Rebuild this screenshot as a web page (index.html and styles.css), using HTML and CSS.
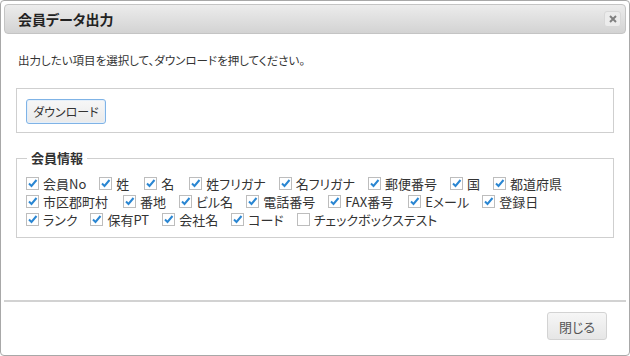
FILE: index.html
```html
<!DOCTYPE html>
<html lang="ja">
<head>
    <meta charset="UTF-8">
    <title>会員データ出力</title>
    <link rel="stylesheet" href="styles.css">
</head>
<body>
    <div class="dialog">
        <div class="titlebar">
            <span class="title">会員データ出力</span>
            <button class="close-x" title="close">
                <svg width="8" height="8" viewBox="0 0 8 8"><path d="M1 1 L7 7 M7 1 L1 7" stroke="#808080" stroke-width="2"/></svg>
            </button>
        </div>
        <div class="content">
            <p class="desc">出力したい項目を選択して、ダウンロードを押してください。</p>
            <div class="panel">
                <button class="button button-primary">ダウンロード</button>
            </div>
            <fieldset class="group">
                <legend>会員情報</legend>
                <div class="checks">
                    <label class="check"><span class="box"><svg width="11" height="11" viewBox="0 0 11 11"><path d="M2 5.5 L4.5 8 L9.5 2" /></svg></span>会員No</label>
                    <label class="check"><span class="box"><svg width="11" height="11" viewBox="0 0 11 11"><path d="M2 5.5 L4.5 8 L9.5 2" /></svg></span>姓</label>
                    <label class="check"><span class="box"><svg width="11" height="11" viewBox="0 0 11 11"><path d="M2 5.5 L4.5 8 L9.5 2" /></svg></span>名</label>
                    <label class="check"><span class="box"><svg width="11" height="11" viewBox="0 0 11 11"><path d="M2 5.5 L4.5 8 L9.5 2" /></svg></span>姓フリガナ</label>
                    <label class="check"><span class="box"><svg width="11" height="11" viewBox="0 0 11 11"><path d="M2 5.5 L4.5 8 L9.5 2" /></svg></span>名フリガナ</label>
                    <label class="check"><span class="box"><svg width="11" height="11" viewBox="0 0 11 11"><path d="M2 5.5 L4.5 8 L9.5 2" /></svg></span>郵便番号</label>
                    <label class="check"><span class="box"><svg width="11" height="11" viewBox="0 0 11 11"><path d="M2 5.5 L4.5 8 L9.5 2" /></svg></span>国</label>
                    <label class="check"><span class="box"><svg width="11" height="11" viewBox="0 0 11 11"><path d="M2 5.5 L4.5 8 L9.5 2" /></svg></span>都道府県</label>
                    <label class="check"><span class="box"><svg width="11" height="11" viewBox="0 0 11 11"><path d="M2 5.5 L4.5 8 L9.5 2" /></svg></span>市区郡町村</label>
                    <label class="check"><span class="box"><svg width="11" height="11" viewBox="0 0 11 11"><path d="M2 5.5 L4.5 8 L9.5 2" /></svg></span>番地</label>
                    <label class="check"><span class="box"><svg width="11" height="11" viewBox="0 0 11 11"><path d="M2 5.5 L4.5 8 L9.5 2" /></svg></span>ビル名</label>
                    <label class="check"><span class="box"><svg width="11" height="11" viewBox="0 0 11 11"><path d="M2 5.5 L4.5 8 L9.5 2" /></svg></span>電話番号</label>
                    <label class="check"><span class="box"><svg width="11" height="11" viewBox="0 0 11 11"><path d="M2 5.5 L4.5 8 L9.5 2" /></svg></span>FAX番号</label>
                    <label class="check"><span class="box"><svg width="11" height="11" viewBox="0 0 11 11"><path d="M2 5.5 L4.5 8 L9.5 2" /></svg></span>Eメール</label>
                    <label class="check"><span class="box"><svg width="11" height="11" viewBox="0 0 11 11"><path d="M2 5.5 L4.5 8 L9.5 2" /></svg></span>登録日</label>
                    <label class="check"><span class="box"><svg width="11" height="11" viewBox="0 0 11 11"><path d="M2 5.5 L4.5 8 L9.5 2" /></svg></span>ランク</label>
                    <label class="check"><span class="box"><svg width="11" height="11" viewBox="0 0 11 11"><path d="M2 5.5 L4.5 8 L9.5 2" /></svg></span>保有PT</label>
                    <label class="check"><span class="box"><svg width="11" height="11" viewBox="0 0 11 11"><path d="M2 5.5 L4.5 8 L9.5 2" /></svg></span>会社名</label>
                    <label class="check"><span class="box"><svg width="11" height="11" viewBox="0 0 11 11"><path d="M2 5.5 L4.5 8 L9.5 2" /></svg></span>コード</label>
                    <label class="check"><span class="box"></span>チェックボックステスト</label>
                </div>
            </fieldset>
        </div>
        <div class="footer">
            <button class="button button-close">閉じる</button>
        </div>
    </div>
</body>
</html>
```

FILE: styles.css
```css
body {
    margin: 0;
    font-family: "Noto Sans CJK JP", "Liberation Sans", sans-serif;
    font-feature-settings: "palt";
    color: #333;
    background-color: #fff;
}
.dialog {
    width: 630px;
    height: 356px;
    box-sizing: border-box;
    border: 1px solid #a8a8a8;
    border-radius: 4px;
    padding: 3px;
    display: flex;
    flex-direction: column;
    background-color: #fff;
}
.titlebar {
    height: 30px;
    box-sizing: border-box;
    border: 1px solid #c4c4c4;
    border-radius: 4px;
    background: linear-gradient(#ececec, #d3d3d3);
    display: flex;
    align-items: center;
    justify-content: space-between;
    padding: 0 4px 0 13px;
}
.title {
    font-size: 14px;
    font-weight: bold;
    color: #222;
}
.close-x {
    width: 17px;
    height: 16px;
    padding: 0;
    border: 1px solid #d8d8d8;
    border-radius: 3px;
    background-color: #ececec;
    display: flex;
    align-items: center;
    justify-content: center;
}
.content {
    flex: 1;
    padding: 0 12px;
}
.desc {
    margin: 18px 0 0 2px;
    font-size: 11.5px;
    line-height: 16px;
}
.panel {
    margin-top: 20px;
    border: 1px solid #cfcfcf;
    padding: 9px 9px 8px;
}
.button {
    font-family: inherit;
    font-feature-settings: "palt";
    font-size: 12px;
    color: #333;
    border-radius: 3px;
    cursor: pointer;
}
.button-primary {
    width: 80px;
    height: 25px;
    border: 1px solid #7fb3e6;
    background: linear-gradient(#f7f7f7, #eaeaea);
    box-shadow: inset 0 0 0 1px #e4effa;
}
.group {
    margin: 17px 0 0;
    border: 1px solid #cfcfcf;
    padding: 0 9px 9px;
}
.group legend {
    font-size: 13px;
    font-weight: bold;
    line-height: 16px;
    padding: 0 4px;
    margin-left: 1px;
}
.checks {
    display: flex;
    flex-wrap: wrap;
    margin-top: 8px;
}
.check {
    display: flex;
    align-items: center;
    height: 18px;
    font-size: 13px;
    margin-right: 13px;
}
.check:nth-child(2), .check:nth-child(3), .check:nth-child(9), .check:nth-child(13) {
    margin-right: 15px;
}
.box {
    width: 13px;
    height: 13px;
    box-sizing: border-box;
    border: 1px solid #bdbdbd;
    background-color: #fff;
    margin-right: 4px;
    display: flex;
    align-items: center;
    justify-content: center;
}
.box path {
    fill: none;
    stroke: #2a86d2;
    stroke-width: 2;
}
.footer {
    border-top: 2px solid #d2d2d2;
    height: 52px;
    box-sizing: border-box;
    display: flex;
    justify-content: flex-end;
    align-items: flex-start;
    padding: 10px 19px 0 0;
}
.button-close {
    width: 60px;
    height: 28px;
    border: 1px solid #d3d3d3;
    background: linear-gradient(#f6f6f6, #e6e6e6);
    font-size: 13px;
    color: #555;
}
```
